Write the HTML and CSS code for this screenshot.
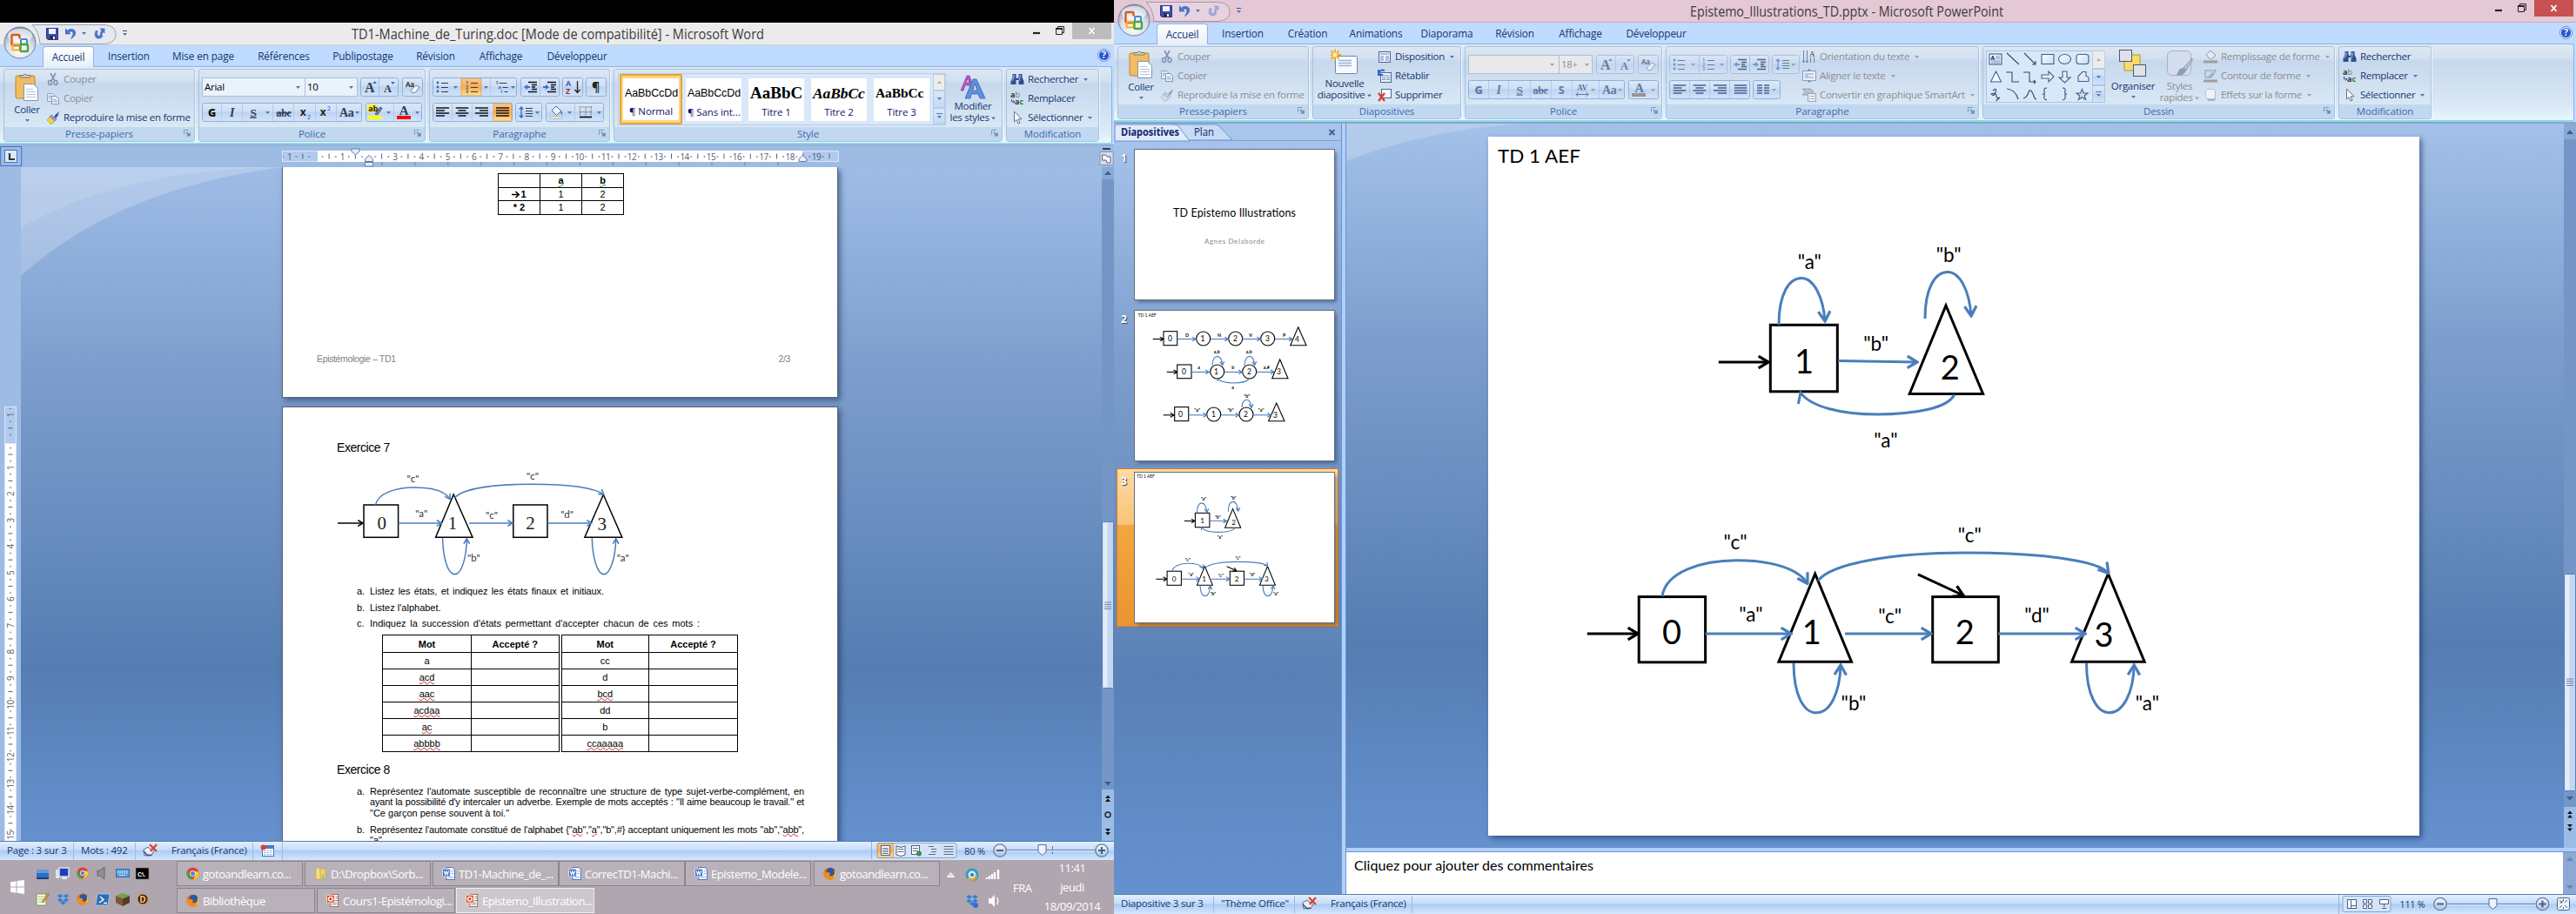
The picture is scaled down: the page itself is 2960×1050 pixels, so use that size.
FILE: index.html
```html
<!DOCTYPE html>
<html lang="fr">
<head>
<meta charset="utf-8">
<title>TD1-Machine_de_Turing.doc</title>
<link rel="stylesheet" href="styles.css">
</head>
<body>
<svg class="defs" width="0" height="0">
  <defs>
    <linearGradient id="gBtn" x1="0" y1="0" x2="0" y2="1"><stop offset="0" stop-color="#dbe8f8"/><stop offset=".45" stop-color="#cfdff4"/><stop offset=".5" stop-color="#bdd3f0"/><stop offset="1" stop-color="#d3e4f8"/></linearGradient>
    <linearGradient id="gHot" x1="0" y1="0" x2="0" y2="1"><stop offset="0" stop-color="#fbc78c"/><stop offset=".5" stop-color="#fda94c"/><stop offset="1" stop-color="#fde296"/></linearGradient>
    <radialGradient id="gOrb" cx=".5" cy=".75" r=".7"><stop offset="0" stop-color="#fff"/><stop offset=".6" stop-color="#d8dde8"/><stop offset="1" stop-color="#8d9ab4"/></radialGradient>
    <linearGradient id="gKnob" x1="0" y1="0" x2="0" y2="1"><stop offset="0" stop-color="#f4f8ff"/><stop offset="1" stop-color="#a9c1e2"/></linearGradient>
    <linearGradient id="gShape" x1="0" y1="0" x2="1" y2="1"><stop offset="0" stop-color="#fff"/><stop offset="1" stop-color="#c5daf3"/></linearGradient>
    <marker id="headBlue" viewBox="0 0 10 10" refX="9" refY="5" markerWidth="5.4" markerHeight="5.4" orient="auto"><path d="M2 0.8L9 5L2 9.2" fill="none" stroke="#4a7ebb" stroke-width="2"/></marker>
    <marker id="headBlack" viewBox="0 0 10 10" refX="9" refY="5" markerWidth="5.4" markerHeight="5.4" orient="auto"><path d="M2 0.8L9 5L2 9.2" fill="none" stroke="#000" stroke-width="2"/></marker>

    <symbol id="orb" viewBox="0 0 38 38">
      <circle cx="19" cy="19" r="18" fill="url(#gOrb)" stroke="#7685a3"/>
      <ellipse cx="19" cy="11" rx="14" ry="8" fill="#fff" opacity=".6"/>
      <g fill="none" stroke-width="2.4">
        <path d="M18 22h-7q-1.500 0-1.500-1.500v-9q0-1.500 1.500-1.500h6q1.500 0 1.500 1.500v3" stroke="#e0571b"/>
        <rect x="20" y="15" width="7" height="6" rx="1" stroke="#3f8cd6" stroke-width="2"/>
        <rect x="10.500" y="21" width="8" height="6.500" rx="1" stroke="#f6b21a" stroke-width="2"/>
        <path d="M19.500 20.500v7.500q0 1 1 1h6q1.500 0 1.500-1.500v-5q0-1.500-1.500-1.500h-7" stroke="#4da53a"/>
      </g>
    </symbol>
    <symbol id="save" viewBox="0 0 14 14"><path d="M.5.5h13v13H2L.5 12z" fill="#3b4fb5" stroke="#27337c"/><rect x="3" y="1" width="8" height="6" fill="#f2f5ff"/><rect x="4" y="9" width="7" height="4.500" fill="#2b2f4f"/><rect x="8" y="10" width="2" height="3" fill="#fff"/></symbol>
    <symbol id="undo" viewBox="0 0 14 14"><path d="M0 1v6.500h6.500L4.600 5.500q4-2.500 5 .5 .6 3-2.600 7.500 6.500-4 5.500-8.500Q11 .5 5.500 1.800 4 2.200 2.700 3.400z" fill="#4a79d8" stroke="#2a4fa5" stroke-width=".6"/></symbol>
    <symbol id="redo" viewBox="0 0 14 14"><path d="M7.500 1H13v5.500l-1.700-1.600Q9 8 10.500 11 7 14.500 3 12.500-.5 9 2.500 3.500l2 .5q-1.500 4.500 1 6 2.500.5 2.500-2 0-3 1.500-5z" fill="#4a79d8" stroke="#2a4fa5" stroke-width=".5"/></symbol>
    <symbol id="help" viewBox="0 0 15 15"><circle cx="7.500" cy="7.500" r="7" fill="#fff" stroke="#5a7fb8"/><circle cx="7.500" cy="7.500" r="5.600" fill="#2457d6"/><text x="7.500" y="11.300" text-anchor="middle" font-size="10.500" font-weight="700" fill="#fff">?</text></symbol>
    <symbol id="paste" viewBox="0 0 28 32"><rect x="1" y="3" width="22" height="26" rx="2" fill="#f0bd62" stroke="#b98432"/><path d="M6 5V2.500h4Q12-.5 14 2.500h4V5z" fill="#d9d4c8" stroke="#7d7867"/><path d="M10.500 12.500h11l5 5v14h-16z" fill="#fdfeff" stroke="#7f93b5"/><path d="M13 18.500h8M13 21.500h11M13 24.500h11M13 27.500h11" stroke="#b4c3dc"/></symbol>
    <symbol id="cut" viewBox="0 0 16 16"><path d="M5 1l5 9M11 1L6 10" stroke="#7f93b3" stroke-width="1.600"/><ellipse cx="4.500" cy="12" rx="2" ry="2.500" fill="none" stroke="#7f93b3" stroke-width="1.500"/><ellipse cx="11" cy="12" rx="2" ry="2.500" fill="none" stroke="#7f93b3" stroke-width="1.500"/></symbol>
    <symbol id="copy" viewBox="0 0 16 16"><path d="M1.500 2.500h6l2 2v7h-8z" fill="#dfe9f6" stroke="#8ea3c3"/><path d="M6.500 5.500h5l3 3v6h-8z" fill="#eaf1fa" stroke="#8095b8"/><path d="M8 9.500h4M8 11.500h5M3 5.500h3M3 7.500h2" stroke="#8ea3c3"/></symbol>
    <symbol id="brush" viewBox="0 0 16 16"><path d="M15 1l-4 3.500-2 3 2 1.500 2.500-3z" fill="#40518f"/><path d="M6 5l6 5-2 2-6-5z" fill="#8da8dd" stroke="#54699e" stroke-width=".7"/><path d="M4 7l5.500 5q-1 3-4 3.500L1 11q1.500-1 3-4z" fill="#f2d34c" stroke="#b08b1f" stroke-width=".7"/></symbol>
    <symbol id="brushOff" viewBox="0 0 16 16"><path d="M15 1l-4 3.500-2 3 2 1.500 2.500-3z" fill="#98a6c0"/><path d="M6 5l6 5-2 2-6-5z" fill="#c7d3e8" stroke="#8fa0bf" stroke-width=".7"/><path d="M4 7l5.500 5q-1 3-4 3.500L1 11q1.500-1 3-4z" fill="#d5dbe6" stroke="#9aa6bb" stroke-width=".7"/></symbol>
    <symbol id="find" viewBox="0 0 16 14"><path d="M2.500 5V1h4v4l1 1h1l1-1V1h4v4l2 4v4h-6V8h-3v5H.5V9z" fill="#2f4f92"/><path d="M4 2v3L2 9M11 2v3l-1 4" stroke="#b5c9ec" fill="none"/></symbol>
    <symbol id="replace" viewBox="0 0 16 16"><text x="0" y="7" font-size="9" font-weight="700" fill="#333">a</text><text x="5.500" y="7" font-size="9" fill="#777">b</text><text x="5" y="15" font-size="9" font-weight="700" fill="#333">a</text><text x="10.500" y="15" font-size="9" font-weight="700" fill="#1f8a2c">c</text><path d="M1.500 9v3h3M3 10.500l2 1.500-2 1.500" fill="none" stroke="#3a5ca8"/></symbol>
    <symbol id="pointer" viewBox="0 0 16 16"><path d="M4.500 1v12l2.700-2.500 1.800 4.500 2-.8-1.900-4.400H13z" fill="#fff" stroke="#5d6f95"/></symbol>
    <symbol id="launch" viewBox="0 0 8 8"><path d="M.5 6V.5H6" fill="none" stroke="#7b9fc9"/><path d="M3 3l3 3M7 3.500V7H3.500" fill="none" stroke="#56779f" stroke-width="1.200"/></symbol>
    <symbol id="dd" viewBox="0 0 5 3"><path d="M0 0h5L2.500 3z" fill="#4a78b8"/></symbol>
    <symbol id="ddOff" viewBox="0 0 5 3"><path d="M0 0h5L2.500 3z" fill="#9c9fa6"/></symbol>
    <symbol id="bullets" viewBox="0 0 14 14"><g fill="#3c5fa8"><circle cx="2" cy="2" r="1.400"/><circle cx="2" cy="7" r="1.400"/><circle cx="2" cy="12" r="1.400"/></g><path d="M6 2.500h8M6 7.500h8M6 12.500h8" stroke="#333b52" stroke-width="1.200"/></symbol>
    <symbol id="numbers" viewBox="0 0 14 14"><g font-size="5.500" font-weight="700" fill="#3c5fa8"><text x="0" y="4">1</text><text x="0" y="9">2</text><text x="0" y="14">3</text></g><path d="M6 2.500h8M6 7.500h8M6 12.500h8" stroke="#333b52" stroke-width="1.200"/></symbol>
    <symbol id="multi" viewBox="0 0 14 14"><g font-size="5.500" font-weight="700" fill="#3c5fa8"><text x="0" y="4">1</text><text x="3" y="9">a</text><text x="6" y="14">i</text></g><path d="M4 2.500h9M8 7.500h6M10 12.500h4" stroke="#333b52" stroke-width="1.200"/></symbol>
    <symbol id="outdent" viewBox="0 0 16 14"><path d="M5 1.500h10M9 4.500h6M9 7h4M9 9.500h6M5 12.500h10" stroke="#10131c" stroke-width="1.500"/><path d="M0 7l4-3v2h3v2H4v2z" fill="#3c6fc8"/></symbol>
    <symbol id="indent" viewBox="0 0 16 14"><path d="M5 1.500h10M9 4.500h6M9 7h4M9 9.500h6M5 12.500h10" stroke="#10131c" stroke-width="1.500"/><path d="M7 7L3 4v2H0v2h3v2z" fill="#3c6fc8"/></symbol>
    <symbol id="alL" viewBox="0 0 15 13"><path d="M0 1.500h15M0 4.500h10M0 7.500h15M0 10.500h10" stroke="currentColor" stroke-width="1.600"/></symbol>
    <symbol id="alC" viewBox="0 0 15 13"><path d="M0 1.500h15M3 4.500h9M0 7.500h15M3 10.500h9" stroke="currentColor" stroke-width="1.600"/></symbol>
    <symbol id="alR" viewBox="0 0 15 13"><path d="M0 1.500h15M5 4.500h10M0 7.500h15M5 10.500h10" stroke="currentColor" stroke-width="1.600"/></symbol>
    <symbol id="alJ" viewBox="0 0 15 13"><path d="M0 1.500h15M0 4.500h15M0 7.500h15M0 10.500h15" stroke="currentColor" stroke-width="1.600"/></symbol>
    <symbol id="spacing" viewBox="0 0 16 14"><path d="M3 1v12M.8 3.500L3 1l2.200 2.500M.8 10.500L3 13l2.200-2.500" fill="none" stroke="#3c6fc8" stroke-width="1.400"/><path d="M8 2.500h8M8 5.500h8M8 8.500h8M8 11.500h8" stroke="#333b52" stroke-width="1.200"/></symbol>
    <symbol id="bucket" viewBox="0 0 16 16"><path d="M3 6l5-5 6 5.500-5.500 5z" fill="#eef4fc" stroke="#4a6699"/><path d="M13 6q3 2 2 5-2-1-2-5z" fill="#3c6fc8"/><rect x="0" y="12.500" width="15" height="3" fill="#e9e3d2" stroke="#999" stroke-width=".5"/></symbol>
    <symbol id="borders" viewBox="0 0 15 14"><path d="M.5 0v12M7.500 0v12M14 0v12M0 .5h15M0 6.500h15" stroke="#444" stroke-dasharray="1 1.300"/><path d="M0 13h15" stroke="#000" stroke-width="1.600"/></symbol>
    <symbol id="eraser" viewBox="0 0 17 16"><text x="0" y="8" font-size="8" font-weight="700" fill="#333">Aa</text><path d="M6 12l6-6 4 2-5 6.500q-4 1-5-2.500z" fill="#f4f6fb" stroke="#6d7c9c"/></symbol>
    <symbol id="spell" viewBox="0 0 18 16"><path d="M1 7l5-3 3 3 5-1-4 8-3-1-5 1z" fill="#e8eef8" stroke="#5a6a88"/><path d="M1 9l5 5 4-1" fill="none" stroke="#3f4f6b" stroke-width="1.500"/><path d="M8 1l8 8M16 1L9 9" stroke="#e23b22" stroke-width="2"/></symbol>
    <symbol id="macro" viewBox="0 0 16 14"><rect x="2.500" y="1.500" width="13" height="12" fill="#fff" stroke="#4f6fae"/><rect x="3" y="2" width="12" height="3" fill="#4f7bd0"/><path d="M4 7.500h10M4 9.500h10M4 11.500h10" stroke="#9cb4dc" stroke-dasharray="2.500 1"/><circle cx="3.500" cy="3.500" r="3" fill="#d9442a"/></symbol>
    <symbol id="minus" viewBox="0 0 16 16"><circle cx="8" cy="8" r="7.200" fill="url(#gKnob)" stroke="#5f7ba8" stroke-width="1.300"/><path d="M4 8h8" stroke="#4d5d7c" stroke-width="2"/></symbol>
    <symbol id="plus" viewBox="0 0 16 16"><circle cx="8" cy="8" r="7.200" fill="url(#gKnob)" stroke="#5f7ba8" stroke-width="1.300"/><path d="M4 8h8M8 4v8" stroke="#4d5d7c" stroke-width="2"/></symbol>
    <symbol id="wordDoc" viewBox="0 0 17 17"><path d="M5.500.5h8l3 3v13h-11z" fill="#f4f8ff" stroke="#3d62ac"/><path d="M12 5.500h3M12 8.500h3M8 13.500h7" stroke="#7f9dd6"/><rect x=".5" y="2.500" width="10" height="10" rx="1" fill="#3c6cc4" stroke="#e9f0ff"/><path d="M2.500 5l1.500 5 1.500-4.500L7 10l1.500-5" fill="none" stroke="#fff" stroke-width="1.300"/></symbol>
    <symbol id="pptDoc" viewBox="0 0 17 17"><rect x="6.500" y=".5" width="9" height="10" fill="#fff" stroke="#a0583d"/><rect x="5.500" y="8.500" width="10" height="8" fill="#fff" stroke="#9a6a55"/><path d="M7 11.500h7M7 13.500h7M12 3.500h3M12 5.500h3" stroke="#888"/><rect x=".5" y="1.500" width="10" height="10" rx="1" fill="#dd4a26" stroke="#ffe9df"/><circle cx="5.500" cy="6.500" r="2.700" fill="none" stroke="#fff" stroke-width="1.500"/></symbol>
    <symbol id="chrome" viewBox="0 0 16 16"><circle cx="8" cy="8" r="7.500" fill="#e2402f"/><path d="M1.400 4.500L5 11l3.500 4.500A7.500 7.500 0 0 1 1.400 4.500z" fill="#3ba84d"/><path d="M15 5.500H8l3.500 5-3.500 5A7.500 7.500 0 0 0 15 5.500z" fill="#f8cd2b"/><circle cx="8" cy="8" r="3.500" fill="#fff"/><circle cx="8" cy="8" r="2.700" fill="#4a86e0"/></symbol>
    <symbol id="firefox" viewBox="0 0 16 16"><circle cx="8" cy="8" r="7.500" fill="#e66a12"/><circle cx="9" cy="6" r="5" fill="#2a56a6"/><path d="M.8 5Q3 7 6 6.500q3 .5 2 2.500-1 2 1.500 2.500 4 0 4.500-5 2.500 4-1 7.500-5 3-9.500.500Q-.5 11 .8 5z" fill="#f08c1c"/><path d="M14 5q1.800 4-1.200 8" fill="none" stroke="#fbd03a" stroke-width="1.300"/></symbol>
    <symbol id="folder" viewBox="0 0 14 16"><path d="M1 1h5l1 2v12H1z" fill="#f4dd84" stroke="#c8a33d" stroke-width=".7"/><path d="M6 2h7v12l-6 2z" fill="#f0cf63" stroke="#c8a33d" stroke-width=".7"/><path d="M9 9l2 .5v5L9 15z" fill="#7db6e8"/></symbol>
    <symbol id="dropbox" viewBox="0 0 16 16"><g fill="#2a84df"><path d="M4.500 1L8 3.500 4.200 6 .8 3.300zM11.500 1L8 3.500 11.800 6l3.400-2.700zM.8 8.500L4.200 6 8 8.500 4.500 11zM15.200 8.500L11.800 6 8 8.500 11.500 11zM8 9.300l3.500 2.500L8 14.500l-3.500-2.700z"/></g></symbol>

    <g id="automate">
      <text class="t" x="11" y="30" font-size="22" textLength="95" lengthAdjust="spacingAndGlyphs">TD 1 AEF</text>
      <g class="st">
        <rect x="324.300" y="216.300" width="77" height="76.500"/><path d="M526 194L568.600 295.500H484.200z"/>
        <rect x="173.200" y="528.600" width="76.400" height="75.200"/><path d="M375.700 502.200L417.500 603.200H333.900z"/>
        <rect x="510.700" y="528.600" width="75.600" height="75.200"/><path d="M712.400 502.200L754.200 603.200H670.600z"/>
        <path d="M493.900 502.800L546 527" marker-end="url(#headBlack)"/>
        <path d="M264.800 259H322" marker-end="url(#headBlack)"/><path d="M113.800 571H172" marker-end="url(#headBlack)"/>
      </g>
      <g class="tr">
        <path d="M334 216C334 180 346 162.500 360 162.500S385 184 387 212"/>
        <path d="M502 209C502 173 514 155.500 528 155.500S553 177 555 206"/>
        <path d="M402 257.600L493 259"/>
        <path class="nohead" d="M535.600 296.500C528 312 490 319 447 319 405 319 370 310 359 294L356.400 307"/>
        <path d="M200 528C204 500 245 486.700 286 486.700S357 497 367 513.500"/>
        <path d="M379 510C395 490 465 478 548 478S700 486 713 501.500"/>
        <path d="M249.600 571H348"/><path d="M410 571H509"/><path d="M586 571H686"/>
        <path d="M351 605C351 640 362 661.800 377.300 661.800S404 640 405 607"/>
        <path d="M687.500 605C687.500 640 699 661.800 714 661.800S741.500 640 742.200 607"/>
      </g>
      <g class="d" text-anchor="middle"><text x="363" y="272">1</text><text x="530.800" y="278.500">2</text><text x="211" y="583">0</text><text x="371.700" y="583">1</text><text x="547.700" y="583">2</text><text x="707.600" y="586">3</text></g>
      <g class="l" text-anchor="middle"><text x="369.300" y="151.500">"a"</text><text x="529.200" y="144">"b"</text><text x="445.600" y="245.600">"b"</text><text x="457" y="357">"a"</text><text x="284" y="474">"c"</text><text x="302" y="557">"a"</text><text x="553.300" y="465.500">"c"</text><text x="461.700" y="559">"c"</text><text x="630.500" y="558">"d"</text><text x="420" y="659">"b"</text><text x="757.400" y="659">"a"</text></g>
    </g>
  </defs>
</svg>

<main class="desk">
<section class="left">
  <div class="void"></div>
  <div class="app word">
    <header class="title">
      <svg class="orb"><use href="#orb"/></svg>
      <svg class="qat" width="120" height="25" viewBox="0 0 120 25"><path d="M0 2.500H84Q96 4 96 13.500T84 24.500H9Q8 10 0 2.500" fill="#dfe6f2" fill-opacity=".5" stroke="#9aa5b8"/><use href="#save" x="16" y="6" width="14" height="14"/><use href="#undo" x="38" y="6" width="13" height="13"/><use href="#dd" x="57" y="11" width="5" height="3"/><use href="#redo" x="71" y="6" width="13" height="13"/><path d="M104 9.500h5" stroke="#274f8f"/><use href="#dd" x="104" y="12" width="5" height="3"/></svg>
      <svg class="caption" width="482" height="25"><text x="0" y="18.500" font-size="16" textLength="474" lengthAdjust="spacingAndGlyphs">TD1-Machine_de_Turing.doc [Mode de compatibilité] - Microsoft Word</text></svg>
      <svg class="winctl" width="93" height="20" viewBox="0 0 93 20"><rect x="48" width="45" height="19" fill="#bcbcbc"/><path d="M3 12h8" stroke="#222" stroke-width="2.200"/><path d="M29.500 6.500h7v7h-7zM31.500 6V4.500h7v7H37" fill="none" stroke="#222"/><path d="M29 7h8" stroke="#222" stroke-width="2"/><path d="M67.500 6l6 7M73.500 6l-6 7" stroke="#fff" stroke-width="1.700"/></svg>
    </header>
    <nav class="tabs"><b>Accueil</b><span class="w80">Insertion</span><span class="w91">Mise en page</span><span class="w94">Références</span><span class="w88">Publipostage</span><span class="w79">Révision</span><span class="w71">Affichage</span><span class="w104">Développeur</span><svg class="help" width="15" height="15"><use href="#help"/></svg></nav>
    <div class="ribbon">
      <section class="grp g-clip">
        <div class="body">
          <div class="big"><svg width="28" height="32"><use href="#paste"/></svg><span>Coller</span><svg width="5" height="3"><use href="#dd"/></svg></div>
          <ul class="cmds"><li class="off"><svg><use href="#cut"/></svg>Couper</li><li class="off"><svg><use href="#copy"/></svg>Copier</li><li><svg><use href="#brush"/></svg>Reproduire la mise en forme</li></ul>
        </div>
        <footer>Presse-papiers<svg><use href="#launch"/></svg></footer>
      </section>
      <section class="grp g-font">
        <div class="rows">
          <svg width="256" height="22" viewBox="232 88 256 22">
            <rect x="232.500" y="88.500" width="178" height="21" fill="#eaf2fb" stroke="#abc1de"/><path d="M350.500 89v20" stroke="#abc1de"/><text x="235" y="103" font-size="11.500" fill="#000">Arial</text><text x="353" y="103" font-size="11.500" fill="#000">10</text><use href="#dd" x="340" y="98" width="5" height="3"/><use href="#dd" x="401" y="98" width="5" height="3"/>
            <rect class="bx" x="414.500" y="88.500" width="43" height="21" rx="2"/><path d="M435.500 89v20" stroke="#a3bfe0"/><text class="sf" x="419" y="105" font-size="16" font-weight="700">A</text><text class="sf" x="441" y="105" font-size="12.500" font-weight="700">A</text><path d="M428 95l2.500-3 2.500 3zM449 93h5l-2.500 3z" fill="#3c6fc8"/>
            <rect class="bx" x="462.500" y="88.500" width="23" height="21" rx="2"/><use href="#eraser" x="466" y="91" width="17" height="16"/>
          </svg>
          <svg width="256" height="22" viewBox="232 117 256 22">
            <rect class="bx" x="232.500" y="117.500" width="183" height="21" rx="2"/><path d="M254.500 118v20M278.500 118v20M313.500 118v20M337.500 118v20M362.500 118v20M386.500 118v20" stroke="#b3cae8"/>
            <text x="243.500" y="132.500" text-anchor="middle" font-size="12.500" font-weight="800" fill="#111">G</text><text class="sf" x="266.500" y="133" text-anchor="middle" font-size="14" font-style="italic" font-weight="700">I</text><text class="sf" x="291" y="132.500" text-anchor="middle" font-size="13.500" font-weight="700" text-decoration="underline">S</text><use href="#dd" x="305" y="127" width="5" height="3"/><text class="sf" x="326" y="132.500" text-anchor="middle" font-size="12" font-weight="700" text-decoration="line-through">abc</text><text x="348" y="132" text-anchor="middle" font-size="12" font-weight="700" fill="#222">x</text><text x="353" y="135.500" font-size="7" fill="#2456c8">2</text><text x="371" y="132" text-anchor="middle" font-size="12" font-weight="700" fill="#222">x</text><text x="376" y="126" font-size="7" fill="#2456c8">2</text><text class="sf" x="390" y="133" font-size="14" font-weight="700">Aa</text><use href="#dd" x="408" y="127" width="5" height="3"/>
            <rect class="bx" x="420.500" y="117.500" width="64" height="21" rx="2"/><path d="M452.500 118v20" stroke="#b3cae8"/><rect x="422" y="119" width="11" height="9" fill="#ffee3a"/><text x="423" y="127" font-size="9.500" font-weight="700" fill="#222">ab</text><path d="M431 130l6-8 2 1.500-5 7z" fill="#6d8fc9" stroke="#445"/><rect x="423" y="132" width="16" height="4" fill="#ffff00"/><use href="#dd" x="444" y="127" width="5" height="3"/><text class="sf" x="464" y="131" text-anchor="middle" font-size="15" font-weight="700" fill="#2c4c8f">A</text><rect x="456" y="132" width="16" height="4" fill="#f00"/><use href="#dd" x="477" y="127" width="5" height="3"/>
          </svg>
        </div>
        <footer>Police<svg><use href="#launch"/></svg></footer>
      </section>
      <section class="grp g-para">
        <div class="rows">
          <svg width="201" height="22" viewBox="498 88 201 22">
            <rect class="bx" x="498.500" y="88.500" width="96" height="21" rx="2"/><rect x="531" y="89" width="23" height="20" fill="url(#gHot)" stroke="#c8954f" stroke-width=".6"/><path d="M564.500 89v20" stroke="#b3cae8"/>
            <use href="#bullets" x="502" y="92" width="14" height="14"/><use href="#dd" x="522" y="98" width="5" height="3"/><use href="#numbers" x="536" y="92" width="14" height="14"/><use href="#dd" x="557" y="98" width="5" height="3"/><use href="#multi" x="570" y="92" width="15" height="14"/><use href="#dd" x="588" y="98" width="5" height="3"/>
            <rect class="bx" x="599.500" y="88.500" width="44" height="21" rx="2"/><path d="M621.500 89v20" stroke="#b3cae8"/><use href="#outdent" x="603" y="92" width="16" height="14"/><use href="#indent" x="625" y="92" width="16" height="14"/>
            <rect class="bx" x="647.500" y="88.500" width="23" height="21" rx="2"/><text x="651" y="98" font-size="9" font-weight="700" fill="#3c5fc8">A</text><text x="651" y="107" font-size="9" font-weight="700" fill="#a83232">Z</text><path d="M664.500 92v13M661.500 102l3 3.500 3-3.500" stroke="#222" fill="none" stroke-width="1.300"/>
            <rect class="bx" x="674.500" y="88.500" width="23" height="21" rx="2"/><text x="681" y="103.500" font-size="14" font-weight="700" fill="#222">¶</text>
          </svg>
          <svg width="201" height="22" viewBox="498 117 201 22" color="#10131c">
            <rect class="bx" x="498.500" y="117.500" width="91" height="21" rx="2"/><path d="M520.500 118v20M543.500 118v20" stroke="#b3cae8"/><rect x="568" y="118" width="21" height="20" fill="url(#gHot)" stroke="#c8954f" stroke-width=".6"/>
            <use href="#alL" x="502" y="121.500" width="15" height="13"/><use href="#alC" x="524.500" y="121.500" width="15" height="13"/><use href="#alR" x="547" y="121.500" width="15" height="13"/><use href="#alJ" x="571" y="121.500" width="15" height="13"/>
            <rect class="bx" x="593.500" y="117.500" width="30" height="21" rx="2"/><use href="#spacing" x="597" y="121" width="16" height="14"/><use href="#dd" x="616" y="127" width="5" height="3"/>
            <rect class="bx" x="628.500" y="117.500" width="66" height="21" rx="2"/><path d="M661.500 118v20" stroke="#b3cae8"/><use href="#bucket" x="632" y="120" width="16" height="16"/><use href="#dd" x="653" y="127" width="5" height="3"/><use href="#borders" x="667" y="121" width="14" height="14"/><use href="#dd" x="687" y="127" width="5" height="3"/>
          </svg>
        </div>
        <footer>Paragraphe<svg><use href="#launch"/></svg></footer>
      </section>
      <section class="grp g-style">
        <div class="body">
          <div class="gallery">
            <div class="sty on"><i>AaBbCcDd</i><span>¶ Normal</span></div>
            <div class="sty"><i>AaBbCcDd</i><span>¶ Sans int...</span></div>
            <div class="sty h1"><i>AaBbC</i><span>Titre 1</span></div>
            <div class="sty h2"><i>AaBbCc</i><span>Titre 2</span></div>
            <div class="sty h3"><i>AaBbCc</i><span>Titre 3</span></div>
            <div class="updown"><span><svg width="5" height="3"><path d="M0 3h5L2.500 0z" fill="#aaa"/></svg></span><span><svg width="5" height="3"><use href="#dd"/></svg></span><span><svg width="7" height="7"><path d="M0 .5h7" stroke="#4a78b8"/><path d="M1 3h5L3.500 6z" fill="#4a78b8"/></svg></span></div>
          </div>
          <div class="big modif"><svg width="30" height="28" viewBox="0 0 30 28"><path d="M1 18L8 1h3l5 15h-4l-1-4H6l-2 6zM7 9h4L9 4z" fill="#b75bc4" stroke="#7c3a8c" stroke-width=".7"/><path d="M6 27L15 5h4l10 22h-6l-2-5h-8l-1 5zM14 18h6l-3-8z" fill="#5b92e0" stroke="#2f5aa5" stroke-width=".7"/></svg><span>Modifier<br>les styles <svg width="5" height="4"><use href="#dd"/></svg></span></div>
        </div>
        <footer>Style<svg><use href="#launch"/></svg></footer>
      </section>
      <section class="grp g-mod">
        <div class="body"><ul class="cmds"><li><svg><use href="#find"/></svg>Rechercher<svg class="ar"><use href="#dd"/></svg></li><li><svg><use href="#replace"/></svg>Remplacer</li><li><svg><use href="#pointer"/></svg>Sélectionner<svg class="ar"><use href="#dd"/></svg></li></ul></div>
        <footer>Modification</footer>
      </section>
    </div>
    <svg class="hruler" width="1280" height="26" viewBox="0 166 1280 26">
      <defs><pattern id="tk" x="363" y="173" width="30.260" height="13" patternUnits="userSpaceOnUse"><path d="M7.600 6v2M22.700 6v2" stroke="#555f73"/><path d="M15.100 3.500v6" stroke="#555f73"/></pattern></defs>
      <rect y="165" width="1280" height="27" fill="#9dbbe3"/><rect y="165" width="1280" height="2" fill="#86a6cf"/>
      <rect x=".7" y="168.500" width="24" height="22" fill="none" stroke="#4a6fc0"/><rect x="5.500" y="172.500" width="14" height="14" fill="#dce9fb" stroke="#4a6fc0"/><path d="M11 176v7h6" fill="none" stroke="#333" stroke-width="2.200"/>
      <rect x="324.500" y="173.500" width="639" height="12" fill="#b2caee" stroke="#d9e6f8"/><rect x="365" y="173" width="557" height="13" fill="#fff"/>
      <rect x="325" y="173" width="630" height="13" fill="url(#tk)"/>
      <text y="183.500" font-size="10" text-anchor="middle" fill="#555f73"><tspan x="332.700">1</tspan><tspan x="393.300">1</tspan><tspan x="453.800">3</tspan><tspan x="484">4</tspan><tspan x="514.300">5</tspan><tspan x="544.600">6</tspan><tspan x="574.800">7</tspan><tspan x="605">8</tspan><tspan x="635.300">9</tspan><tspan x="665.600">10</tspan><tspan x="695.900">11</tspan><tspan x="726">12</tspan><tspan x="756.400">13</tspan><tspan x="786.600">14</tspan><tspan x="816.900">15</tspan><tspan x="847">16</tspan><tspan x="877.400">17</tspan><tspan x="907.700">18</tspan><tspan x="938">19</tspan></text>
      <path d="M438.500 188h489" stroke="#777f8e" stroke-width="3.500" stroke-dasharray="1 36.900"/>
      <path d="M404 171h9v3l-4.500 4-4.500-4z" fill="#e8eef8" stroke="#5c7db5"/><path d="M419.500 185.500v-3l4.500-4 4.500 4v3zM419.500 186.500h9v4.500h-9z" fill="#e8eef8" stroke="#5c7db5"/><path d="M918 185.500v-3l4.500-4 4.500 4v3z" fill="#e8eef8" stroke="#5c7db5"/>
      <path d="M1267 171h9" stroke="#333f55" stroke-width="2"/><rect x="1264" y="174.500" width="15" height="15" fill="#d3dded" stroke="#8795ae"/><path d="M1266.500 178h4l1.500 2h4v7h-4l-1-3h-4.500z" fill="#fff" stroke="#555f73"/>
    </svg>
    <div class="work">
      <svg class="vruler" width="24" height="774" viewBox="0 192 24 774">
        <defs><pattern id="tv" x="5" y="507" width="14" height="30.260" patternUnits="userSpaceOnUse"><path d="M6 7.600h2M6 22.700h2" stroke="#555f73"/><path d="M4.500 15.100h5" stroke="#555f73"/></pattern></defs>
        <rect y="192" width="24" height="774" fill="#9dbbe3"/><rect x="5.500" y="467.500" width="13" height="500" fill="#b2caee" stroke="#d9e6f8"/><rect x="6" y="509.500" width="12" height="457" fill="#fff"/><rect x="5" y="468" width="14" height="498" fill="url(#tv)"/>
        <g font-size="10" text-anchor="middle" fill="#555f73" class="vn"><text transform="translate(16 476.700)rotate(-90)">1</text><text transform="translate(16 537.300)rotate(-90)">1</text><text transform="translate(16 567.500)rotate(-90)">2</text><text transform="translate(16 597.800)rotate(-90)">3</text><text transform="translate(16 628)rotate(-90)">4</text><text transform="translate(16 658.300)rotate(-90)">5</text><text transform="translate(16 688.500)rotate(-90)">6</text><text transform="translate(16 718.800)rotate(-90)">7</text><text transform="translate(16 749)rotate(-90)">8</text><text transform="translate(16 779.300)rotate(-90)">9</text><text transform="translate(16 809.600)rotate(-90)">10</text><text transform="translate(16 839.900)rotate(-90)">11</text><text transform="translate(16 870)rotate(-90)">12</text><text transform="translate(16 900.400)rotate(-90)">13</text><text transform="translate(16 930.600)rotate(-90)">14</text><text transform="translate(16 959.500)rotate(-90)">15</text></g>
      </svg>
      <div class="canvas">
        <svg class="swoosh" width="300" height="130" viewBox="0 0 300 130"><path d="M0 0H300Q110 25 0 125z" fill="#fff" opacity=".22"/><path d="M0 0H290Q110 5 0 70z" fill="#fff" opacity=".12"/></svg>
        <article class="page p1">
          <table class="mini"><tr><td></td><th><u class="g">a</u></th><th><u class="g">b</u></th></tr><tr><th><svg class="arr" width="10" height="9" viewBox="0 0 10 9"><path d="M0 4.500h8M4.500 1L8.300 4.500 4.500 8" fill="none" stroke="#000" stroke-width="1.500"/></svg>1</th><td>1</td><td>2</td></tr><tr><th>* 2</th><td>1</td><td>2</td></tr></table>
          <div class="pfoot"><span>Epistémologie – TD1</span><span>2/3</span></div>
        </article>
        <article class="page p2">
          <h2>Exercice 7</h2>
          <svg class="fig" width="340" height="124" viewBox="0 0 340 124">
            <g class="st"><rect x="30" y="41" width="39.600" height="37.300"/><path d="M133.200 29L155 78.300H112.600z"/><rect x="201.800" y="41" width="39.200" height="37.300"/><path d="M305.300 29.300L326.800 78.300H283.900z"/><path d="M0 62H29" marker-end="url(#headBlack)"/></g>
            <g class="tr"><path d="M43.500 41C46 28 66 21 88.600 21S124 26 129 34.500"/><path d="M134.500 32.700C145 22 180 17.300 222.400 17.300S295 21 305.800 29.300"/><path d="M69.600 62H119.500"/><path d="M151 62H201"/><path d="M241 62H292"/><path d="M120.600 79.300C121 100 126 120.700 134.500 120.700S148 100 148.300 80"/><path d="M292.300 79.300C292.700 100 298 120.700 305.800 120.700S319.400 100 319.700 80"/></g>
            <g class="d" text-anchor="middle"><text x="50.700" y="69.300">0</text><text x="132" y="69.300">1</text><text x="221.600" y="69.300">2</text><text x="303.700" y="70.300">3</text></g>
            <g class="l" text-anchor="middle"><text x="86.500" y="15.300">"c"</text><text x="96.200" y="55.300">"a"</text><text x="224" y="11.700">"c"</text><text x="177" y="56.700">"c"</text><text x="263.700" y="56">"d"</text><text x="156.300" y="105.700">"b"</text><text x="327.700" y="105.700">"a"</text></g>
          </svg>
          <div class="li"><em>a.</em><p class="j269">Listez les états, et indiquez les états finaux et initiaux.</p></div>
          <div class="li"><em>b.</em><p>Listez l'alphabet.</p></div>
          <div class="li"><em>c.</em><p class="j379">Indiquez la succession d'états permettant d'accepter chacun de ces mots :</p></div>
          <table class="mots">
            <tr><th>Mot</th><th class="dbl">Accepté ?</th><th>Mot</th><th>Accepté ?</th></tr>
            <tr><td>a</td><td class="dbl"></td><td>cc</td><td></td></tr>
            <tr><td><u>acd</u></td><td class="dbl"></td><td>d</td><td></td></tr>
            <tr><td><u>aac</u></td><td class="dbl"></td><td><u>bcd</u></td><td></td></tr>
            <tr><td><u>acdaa</u></td><td class="dbl"></td><td>dd</td><td></td></tr>
            <tr><td><u>ac</u></td><td class="dbl"></td><td>b</td><td></td></tr>
            <tr><td><u>abbbb</u></td><td class="dbl"></td><td><u>ccaaaaa</u></td><td></td></tr>
          </table>
          <h2 class="ex8">Exercice 8</h2>
          <div class="li tight"><em>a.</em><div><p class="j499">Représentez l'automate susceptible de reconnaître une structure de type sujet-verbe-complément, en</p><p class="j499 dense">ayant la possibilité d'y intercaler un adverbe. Exemple de mots acceptés : "Il aime beaucoup le travail." et</p><p>"Ce garçon pense souvent à toi."</p></div></div>
          <div class="li tight last"><em>b.</em><div><p class="j499 dense">Représentez l'automate constitué de l'alphabet {"<u>ab</u>","<u>a</u>","b",#} acceptant uniquement les mots "ab","<u>abb</u>",</p><p>"a".</p></div></div>
        </article>
      </div>
      <svg class="vscroll" width="14" height="774" viewBox="0 0 14 774"><rect width="14" height="774" fill="#7396c6"/><rect width="14" height="14" fill="#89a9d5"/><path d="M3 9h8L7 4.500z" fill="#3f5a8c"/><rect x=".5" y="407.500" width="13" height="191" rx="1" fill="#c3d6f1" stroke="#5f7db0"/><rect x="1.500" y="408.500" width="5" height="189" fill="#e3edfa"/><path d="M3 500h8M3 502.500h8M3 505h8M3 507.500h8" stroke="#6d85ad"/><path d="M3 706h8l-4 4.500z" fill="#3f5a8c"/><rect y="715" width="14" height="59" fill="#9cbce8"/><path d="M4 725l3-3.500 3 3.500zM4 729l3-3.500 3 3.500z" fill="#111"/><circle cx="7" cy="744" r="3" fill="none" stroke="#223" stroke-width="1.500"/><path d="M4 760h6l-3 3.500zM4 764h6l-3 3.500z" fill="#111"/></svg>
    </div>
    <footer class="status">
      <span class="s85">Page : 3 sur 3</span><span class="s71">Mots : 492</span><span class="s135"><svg width="18" height="16"><use href="#spell"/></svg>Français (France)</span><span class="s34"><svg width="16" height="14"><use href="#macro"/></svg></span>
      <svg class="zoom" width="279" height="21" viewBox="1001 967 279 21">
        <path d="M1001.500 967v20" stroke="#8fb0dd"/><rect x="1008" y="968.500" width="91" height="17" rx="2" fill="#d4e3f7" stroke="#86a5d0"/><rect x="1008.500" y="969" width="18" height="16" fill="url(#gHot)" stroke="#c8954f" stroke-width=".6"/>
        <g fill="#fff" stroke="#4a5f88"><rect x="1012.500" y="971.500" width="10" height="11"/><path d="M1030 972l5 1.500 5-1.500v10l-5 1.500-5-1.500z"/><rect x="1047.500" y="971.500" width="9" height="10"/></g><path d="M1014 974.500h7M1014 976.500h7M1014 978.500h7M1014 980.500h7M1031.500 975.500h7M1031.500 978.500h7M1049 974.500h6M1049 977.500h6M1067 972.500h6M1070 975.500h6M1070 978.500h6M1067 981.500h8M1084.500 972.500h11M1084.500 975.500h11M1084.500 978.500h11M1084.500 981.500h11" stroke="#5a6a88"/><circle cx="1056" cy="980.500" r="3" fill="#3b8f5f"/>
        <text x="1108" y="981.500" font-size="11.500" textLength="24" lengthAdjust="spacingAndGlyphs" fill="#15366f">80 %</text>
        <path d="M1157 976.500h101M1209.500 972v9" stroke="#5b7cae"/><path d="M1157 977.500h101" stroke="#e8f1fd"/><use href="#minus" x="1141" y="969" width="16" height="16"/><use href="#plus" x="1258" y="969" width="16" height="16"/><path d="M1193 970.500h9v8l-4.500 4-4.500-4z" fill="#eef4fc" stroke="#4f6c9e"/>
      </svg>
    </footer>
  </div>
  <footer class="taskbar">
    <svg class="start" width="16" height="16" viewBox="0 0 16 16"><path d="M0 2.300L6.500 1.300V7.500H0zM7.500 1.100L16 0V7.500H7.500zM0 8.500h6.500v6.200L0 13.700zM7.500 8.500H16V16l-8.500-1.200z" fill="#fff"/></svg>
    <svg class="quick" width="140" height="62" viewBox="38 988 140 62">
      <rect x="42" y="999" width="14" height="11" fill="#2f6fc0"/><rect x="42" y="999" width="14" height="4" fill="#5f9be0"/><rect x="42" y="1008" width="14" height="2" fill="#17407c"/>
      <rect x="68" y="997" width="11" height="10" fill="#1e3fc0" stroke="#dfe3ea" stroke-width="1.500"/><rect x="64" y="999" width="4" height="10" fill="#dfe3ea"/><path d="M71 1009h6" stroke="#eee" stroke-width="2"/>
      <use href="#chrome" x="88" y="996" width="14" height="14"/>
      <path d="M112 1000h3l5-4v14l-5-4h-3z" fill="#8d8f96" stroke="#666"/><rect x="133.500" y="998.500" width="15" height="9" fill="#4f9be0" stroke="#2f6fb0"/><path d="M135 1001h12M135 1003h12M137 1005.500h8" stroke="#fff" stroke-dasharray="1.500 1"/>
      <rect x="156" y="997" width="15" height="13" fill="#000" stroke="#888" stroke-width=".6"/><text x="158" y="1006.500" font-size="6.500" font-weight="700" fill="#fff">C:\.</text>
      <rect x="42" y="1027" width="11" height="13" fill="#fdfdf2" stroke="#7a9c4a"/><path d="M43.500 1030h8M43.500 1033h8M43.500 1036h8" stroke="#9bbf60"/><path d="M48 1036l7-10 1.500 1-6.500 10z" fill="#f0a020" stroke="#555" stroke-width=".5"/>
      <use href="#dropbox" x="65" y="1026" width="15" height="15"/><use href="#firefox" x="88" y="1026" width="14" height="14"/>
      <path d="M112 1027h14l-2 13h-14z" fill="#2d6db5" stroke="#bcd6f2" stroke-width=".7"/><path d="M115 1030l4 3.500-5 3.500M119 1037.500h4" fill="none" stroke="#fff" stroke-width="1.500"/>
      <path d="M133 1029l8-3 8 3-8 3.500z" fill="#6fa53d"/><path d="M133 1029l8 3.500v8.500l-8-4z" fill="#7c5638"/><path d="M149 1029l-8 3.500v8.500l8-4z" fill="#593a24"/>
      <circle cx="164" cy="1033" r="6" fill="#3a2312" stroke="#d99a52"/><text x="160.200" y="1036.700" font-size="10" font-weight="700" fill="#ffc37a">D</text>
    </svg>
    <div class="tasks">
      <div class="trow r1"><span><svg><use href="#chrome"/></svg>gotoandlearn.co...</span><span><svg><use href="#folder"/></svg>D:\Dropbox\Sorb...</span><span><svg><use href="#wordDoc"/></svg>TD1-Machine_de_...</span><span class="nl"><svg><use href="#wordDoc"/></svg>CorrecTD1-Machi...</span><span class="nl"><svg><use href="#wordDoc"/></svg>Epistemo_Modele...</span><span><svg><use href="#firefox"/></svg>gotoandlearn.co...</span></div>
      <div class="trow r2"><span><svg><use href="#firefox"/></svg>Bibliothèque</span><span><svg><use href="#pptDoc"/></svg>Cours1-Epistémologi...</span><span class="cur"><svg><use href="#pptDoc"/></svg>Epistemo_Illustration...</span></div>
    </div>
    <svg class="tray" width="72" height="62" viewBox="1084 988 72 62"><path d="M1088.500 1007.500h8l-4-5z" fill="#ddd" stroke="#fff"/><circle cx="1117" cy="1005" r="6" fill="#cfeaf5" stroke="#2b9fc4" stroke-width="3"/><path d="M1112 1009q6 5 10-3" fill="none" stroke="#e8a52a" stroke-width="2.500"/><circle cx="1117" cy="1005" r="2" fill="#2b7fb4"/><path d="M1134 1010v-2M1137 1010v-4M1140 1010v-6M1143 1010v-8M1147 1010v-11" stroke="#fff" stroke-width="2.400"/><use href="#dropbox" x="1109" y="1027" width="16" height="15"/><circle cx="1121" cy="1040" r="3" fill="#2f6fd0"/><path d="M1136 1032h3l4-4v14l-4-4h-3z" fill="#fff"/><path d="M1145.500 1031q2.500 4 0 8" fill="none" stroke="#fff" stroke-width="1.300"/></svg>
    <span class="lang">FRA</span>
    <div class="clock"><span>11:41</span><span>jeudi</span><span>18/09/2014</span></div>
  </footer>
</section>

<section class="app ppt">
  <header class="title">
    <svg class="orb"><use href="#orb"/></svg>
    <svg class="qat" width="120" height="25" viewBox="0 0 120 25"><path d="M0 2.500H84Q96 4 96 13.500T84 24.500H9Q8 10 0 2.500" fill="#e6dbe6" fill-opacity=".6" stroke="#a898ab"/><use href="#save" x="16" y="6" width="14" height="14"/><use href="#undo" x="38" y="6" width="13" height="13"/><use href="#dd" x="57" y="11" width="5" height="3"/><g opacity=".45"><use href="#redo" x="71" y="6" width="13" height="13"/></g><path d="M104 9.500h5" stroke="#274f8f"/><use href="#dd" x="104" y="12" width="5" height="3"/></svg>
    <svg class="caption" width="368" height="25"><text x="0" y="18.500" font-size="16" textLength="360" lengthAdjust="spacingAndGlyphs">Epistemo_Illustrations_TD.pptx - Microsoft PowerPoint</text></svg>
    <svg class="winctl" width="93" height="20" viewBox="0 0 93 20"><rect x="48" width="45" height="19" fill="#c75050"/><path d="M3 12h8" stroke="#222" stroke-width="2.200"/><path d="M29.500 6.500h7v7h-7zM31.500 6V4.500h7v7H37" fill="none" stroke="#222"/><path d="M29 7h8" stroke="#222" stroke-width="2"/><path d="M67.500 6l6 7M73.500 6l-6 7" stroke="#fff" stroke-width="1.700"/></svg>
  </header>
  <nav class="tabs"><b>Accueil</b><span class="w80">Insertion</span><span class="w69">Création</span><span class="w104">Animations</span><span class="w73">Diaporama</span><span class="w81">Révision</span><span class="w69">Affichage</span><span class="w104">Développeur</span><svg class="help" width="15" height="15"><use href="#help"/></svg></nav>
  <div class="ribbon">
    <section class="grp g-clip">
      <div class="body">
        <div class="big"><svg width="28" height="32"><use href="#paste"/></svg><span>Coller</span><svg width="5" height="3"><use href="#dd"/></svg></div>
        <ul class="cmds"><li class="off"><svg><use href="#cut"/></svg>Couper</li><li class="off"><svg><use href="#copy"/></svg>Copier</li><li class="off"><svg><use href="#brushOff"/></svg>Reproduire la mise en forme</li></ul>
      </div>
      <footer>Presse-papiers<svg><use href="#launch"/></svg></footer>
    </section>
    <section class="grp g-dia">
      <div class="body">
        <div class="big nouv"><svg width="32" height="30" viewBox="0 0 32 30"><rect x="5.500" y="8.500" width="25" height="20" rx="1" fill="#f7faff" stroke="#6e84ab"/><path d="M9 13.500h15M9 16.500h15M9 19.500h15" stroke="#9db1d6" stroke-width="1.500"/><path d="M5 .5v13M-1 7h13M.5 2.500l9 9M9.500 2.500l-9 9" stroke="#f5a81c" stroke-width="1.800"/><circle cx="5" cy="7" r="2.500" fill="#fff3a0"/></svg><span>Nouvelle<br>diapositive <svg width="5" height="4"><use href="#dd"/></svg></span></div>
        <ul class="cmds"><li><svg viewBox="0 0 16 16"><rect x="1.500" y="2.500" width="13" height="12" fill="#eef4fc" stroke="#4a6496"/><path d="M3 5h10M3 8h4M3 10h4M3 12h4M9 8h4M9 10h4M9 12h4" stroke="#7089ba"/></svg>Disposition<svg class="ar"><use href="#dd"/></svg></li><li><svg viewBox="0 0 16 16"><rect x="3.500" y="4.500" width="12" height="11" fill="#eef4fc" stroke="#4a6496"/><path d="M5 8h9M5 10.500h4M5 12.500h4M10 10.500h4M10 12.500h4" stroke="#7089ba"/><path d="M1 1v6h5M1 6Q3 0 8 2" fill="none" stroke="#2c63c8" stroke-width="2"/></svg>Rétablir</li><li><svg viewBox="0 0 16 16"><rect x="4.500" y="1.500" width="11" height="10" fill="#f4f8ff" stroke="#4a6496"/><path d="M1 6l7 9M8 6l-7 9" stroke="#dc3b22" stroke-width="2.200"/></svg>Supprimer</li></ul>
      </div>
      <footer>Diapositives</footer>
    </section>
    <section class="grp g-pfont">
      <div class="rows">
        <svg width="222" height="22" viewBox="1686 62 222 22">
          <rect x="1686.500" y="62.500" width="142" height="21" fill="#e9e9e9" stroke="#a9c0dc"/><path d="M1790.500 63v20" stroke="#a9c0dc"/><text x="1793" y="77" font-size="11.500" fill="#8d9097">18+</text><use href="#ddOff" x="1780" y="72" width="5" height="3"/><use href="#ddOff" x="1820" y="72" width="5" height="3"/>
          <g opacity=".6"><rect class="bx" x="1833.500" y="62.500" width="43" height="21" rx="2"/><path d="M1855.500 63v20" stroke="#a3bfe0"/><text class="sf" x="1838" y="79" font-size="16" font-weight="700">A</text><text class="sf" x="1861" y="79" font-size="12.500" font-weight="700">A</text><path d="M1847 69l2.500-3 2.500 3zM1868 67h5l-2.500 3z" fill="#3c6fc8"/><rect class="bx" x="1881.500" y="62.500" width="23" height="21" rx="2"/><use href="#eraser" x="1885" y="65" width="17" height="16"/></g>
        </svg>
        <svg width="222" height="22" viewBox="1686 91 222 22">
          <g class="dim"><rect class="bx" x="1686.500" y="91.500" width="179" height="21" rx="2"/><path d="M1709.500 92v20M1732.500 92v20M1757.500 92v20M1781.500 92v20M1805.500 92v20M1836.500 92v20" stroke="#b3cae8"/>
          <text x="1698" y="106.500" text-anchor="middle" font-size="12.500" font-weight="800">G</text><text class="sf" x="1721" y="107" text-anchor="middle" font-size="14" font-style="italic" font-weight="700">I</text><text class="sf" x="1745" y="106.500" text-anchor="middle" font-size="13.500" font-weight="700" text-decoration="underline">S</text><text class="sf" x="1769" y="106.500" text-anchor="middle" font-size="12" font-weight="700" text-decoration="line-through">abc</text><text x="1793" y="106.500" text-anchor="middle" font-size="12.500" font-weight="700">S</text><text class="sf" x="1817" y="102.500" text-anchor="middle" font-size="9.500" font-weight="700">AV</text><path d="M1810 107.500h14M1812.500 105l-2.500 2.500 2.500 2.500M1821.500 105l2.500 2.500-2.500 2.500" stroke="#5a76ab" fill="none"/><text class="sf" x="1840" y="107" font-size="14" font-weight="700">Aa</text>
          <rect class="bx" x="1870.500" y="91.500" width="34" height="21" rx="2"/><text class="sf" x="1882.500" y="105" text-anchor="middle" font-size="15" font-weight="700">A</text><rect x="1874" y="106" width="16" height="4" fill="#9a958f"/></g><use href="#ddOff" x="1827" y="101" width="5" height="3"/><use href="#ddOff" x="1858" y="101" width="5" height="3"/><use href="#ddOff" x="1896" y="101" width="5" height="3"/>
        </svg>
      </div>
      <footer>Police<svg><use href="#launch"/></svg></footer>
    </section>
    <section class="grp g-ppara">
      <div class="body">
      <div class="rows">
        <svg width="150" height="22" viewBox="1916 62 150 22"><g opacity=".6">
          <rect class="bx" x="1916.500" y="62.500" width="66" height="21" rx="2"/><path d="M1950.500 63v20" stroke="#8fafe0"/><use href="#bullets" x="1920" y="66" width="14" height="14"/><use href="#numbers" x="1954" y="66" width="14" height="14"/>
          <rect class="bx" x="1986.500" y="62.500" width="44" height="21" rx="2"/><path d="M2008.500 63v20" stroke="#8fafe0"/><use href="#outdent" x="1990" y="66" width="16" height="14"/><use href="#indent" x="2012" y="66" width="16" height="14"/>
          <rect class="bx" x="2034.500" y="62.500" width="31" height="21" rx="2"/><use href="#spacing" x="2038" y="66" width="16" height="14"/></g><use href="#ddOff" x="1941" y="72" width="5" height="3"/><use href="#ddOff" x="1974" y="72" width="5" height="3"/><use href="#ddOff" x="2056" y="72" width="5" height="3"/>
        </svg>
        <svg width="150" height="22" viewBox="1916 91 150 22" color="#4a5f92">
          <rect class="bx" x="1916.500" y="91.500" width="92" height="21" rx="2"/><path d="M1939.500 92v20M1962.500 92v20M1985.500 92v20" stroke="#b3cae8"/><use href="#alL" x="1920.500" y="95.500" width="15" height="13"/><use href="#alC" x="1943.500" y="95.500" width="15" height="13"/><use href="#alR" x="1967" y="95.500" width="15" height="13"/><use href="#alJ" x="1990.500" y="95.500" width="15" height="13"/>
          <rect class="bx" x="2012.500" y="91.500" width="31" height="21" rx="2"/><path d="M2017 97h6M2017 100h6M2017 103h6M2017 106h6M2025 97h6M2025 100h6M2025 103h6M2025 106h6" stroke="#4a5f92" stroke-width="1.500"/><use href="#ddOff" x="2034" y="101" width="5" height="3"/>
        </svg>
      </div>
      <ul class="cmds"><li class="off"><svg viewBox="0 0 16 16"><path d="M1.500 1v14M5.500 1v14M9.500 9v6M13.500 9v6M0 13l1.500 2L3 13M4 13l1.500 2L7 13" stroke="#6d84ad" fill="none"/><text class="sf" x="8" y="8" font-size="9">A</text></svg>Orientation du texte<svg class="ar"><use href="#ddOff"/></svg></li><li class="off"><svg viewBox="0 0 16 16"><rect x=".5" y="2.500" width="15" height="11" fill="#e8effa" stroke="#8a9cc0"/><path d="M3 6h10M3 8h4M3 10h10" stroke="#8a9cc0"/><path d="M6 2l2-2 2 2zM6 14l2 2 2-2z" fill="#6d84ad"/></svg>Aligner le texte<svg class="ar"><use href="#ddOff"/></svg></li><li class="off"><svg viewBox="0 0 16 16"><path d="M0 1h9l4 3.500L9 8H0l3-3.500z" fill="#b9bfcb" stroke="#98a2b5"/><rect x="6.500" y="6.500" width="9" height="9" fill="#eef2f8" stroke="#98a2b5"/><path d="M8 9.500h1M8 12.500h1M10 9.500h4M10 12.500h4" stroke="#98a2b5"/></svg>Convertir en graphique SmartArt<svg class="ar"><use href="#ddOff"/></svg></li></ul>
      </div>
      <footer>Paragraphe<svg><use href="#launch"/></svg></footer>
    </section>
    <section class="grp g-draw">
      <div class="body">
        <svg class="shapes" width="137" height="60" viewBox="2280 57 137 60">
          <rect x="2280.500" y="57.500" width="136" height="59" fill="#d9e8f8" stroke="#a9c6ea"/><rect x="2402.500" y="57.500" width="14" height="20" fill="#ececec" stroke="#c4cfdf"/><rect x="2402.500" y="78.500" width="14" height="18" fill="url(#gBtn)" stroke="#a9c6ea"/><rect x="2402.500" y="97.500" width="14" height="19" fill="url(#gBtn)" stroke="#a9c6ea"/><path d="M2407 69h5l-2.500-3z" fill="#aaa"/><use href="#dd" x="2407" y="86" width="5" height="3"/><path d="M2406 104.500h7" stroke="#4a78b8"/><use href="#dd" x="2407" y="107" width="5" height="3"/>
          <g fill="url(#gShape)" stroke="#466089" stroke-width="1.100"><rect x="2284" y="61" width="14" height="12"/><rect x="2344" y="61.500" width="14" height="11"/><ellipse cx="2370.500" cy="67" rx="7" ry="5.500"/><rect x="2384" y="61.500" width="14" height="11" rx="3"/><path d="M2291.500 81l6 12h-12zM2344 85h8v-4l6 6-6 6v-4h-8zM2368 81h5v7h4l-6.500 6-6.500-6h4zM2386 92.500v-6l5-5h4v5q4 0 3 6zM2390.500 101.500l1.800 4.500h4.700l-3.800 3 1.500 4.500-4.200-2.800-4.200 2.800 1.500-4.500-3.800-3h4.700z"/></g>
          <g fill="none" stroke="#2f4a7c" stroke-width="1.100"><path d="M2304 60l14 13M2324 60l13 13m0-4v4h-4M2303 82h7v11h8M2323 82h7v11h7m-2-2l2 2-2 2M2288 103q5-4 3 2t-5 2q6-2 6 2t4 2q-6 5-3 3M2304 101q10 1 13 12M2323 112q4-1 6-7t6 4q1 4 3 4M2350 100q-4 0-3 4t-2 3q3 0 2 3t3 4M2368 100q4 0 3 4t2 3q-3 0-2 3t-3 4"/></g>
          <text x="2285.500" y="67.500" font-size="6.500" font-weight="700" fill="#223">A</text><path d="M2291 64h5M2291 66h5M2286 69h10M2286 71h10" stroke="#6f87b5" stroke-width=".8"/>
        </svg>
        <div class="big org"><svg width="32" height="32" viewBox="0 0 32 32"><rect x="6" y="6" width="18" height="18" fill="#f8dc6b" stroke="#b79425"/><rect x=".5" y=".5" width="14" height="13" fill="#dfe2e8" stroke="#4f5868"/><rect x="16.500" y="17.500" width="14" height="13" fill="#dfe2e8" stroke="#4f5868"/></svg><span>Organiser</span><svg width="5" height="3"><use href="#dd"/></svg></div>
        <div class="big off styl"><svg width="32" height="32" viewBox="0 0 32 32"><rect x="1.500" y="1.500" width="27" height="28" rx="5" fill="#d3dded" stroke="#a4b2cb"/><path d="M30 10L20 21l3 3 7-12z" fill="#b7c3d8" stroke="#8a97af"/><path d="M20 21q-6 0-8 9 9 0 11-6z" fill="#8e9bb3"/></svg><span>Styles<br>rapides <svg width="5" height="4"><use href="#ddOff"/></svg></span></div>
        <ul class="cmds"><li class="off"><svg viewBox="0 0 16 16"><path d="M3 6l5-5 6 5.500-5.500 5z" fill="#e4ebf6" stroke="#8495b3"/><rect y="12.500" width="16" height="3" fill="#a19d99"/></svg>Remplissage de forme<svg class="ar"><use href="#ddOff"/></svg></li><li class="off"><svg viewBox="0 0 16 16"><path d="M2 2h8M2 2v8h7l5-8" fill="none" stroke="#8495b3"/><path d="M6 9l7-8 1.500 1.500-7 7z" fill="#cdd8ea" stroke="#8495b3"/><rect y="12.500" width="16" height="3" fill="#a19d99"/></svg>Contour de forme<svg class="ar"><use href="#ddOff"/></svg></li><li class="off"><svg viewBox="0 0 16 16"><rect x="4" y="5" width="10" height="10" rx="3" fill="#a3b2ce"/><rect x="2.500" y="1.500" width="11" height="11" rx="2.500" fill="#eef3fb" stroke="#b4c1d8"/></svg>Effets sur la forme<svg class="ar"><use href="#ddOff"/></svg></li></ul>
      </div>
      <footer>Dessin<svg><use href="#launch"/></svg></footer>
    </section>
    <section class="grp g-mod">
      <div class="body"><ul class="cmds"><li><svg><use href="#find"/></svg>Rechercher</li><li><svg><use href="#replace"/></svg>Remplacer<svg class="ar"><use href="#dd"/></svg></li><li><svg><use href="#pointer"/></svg>Sélectionner<svg class="ar"><use href="#dd"/></svg></li></ul></div>
      <footer>Modification</footer>
    </section>
  </div>
  <div class="pwork">
    <aside class="pane">
      <svg class="ptabs" width="261" height="21" viewBox="0 0 261 21"><rect width="261" height="21" fill="#a9c5ec"/><path d="M61 19V4q0-3 3-3h52q4 0 6 3l14 15z" fill="#c6dbf6" stroke="#6f93c8"/><path d="M1 20V4q0-3 3-3h65q4 0 6 3l12 16z" fill="#dfeafa" stroke="#6f93c8"/><path d="M87 19.500h174" stroke="#7fa3d6"/><text x="8" y="14" font-size="12" font-weight="700" textLength="67" lengthAdjust="spacingAndGlyphs">Diapositives</text><text x="92" y="14" font-size="12" textLength="23" lengthAdjust="spacingAndGlyphs">Plan</text><path d="M247.500 7l6 6M253.500 7l-6 6" stroke="#3d66a5" stroke-width="2"/></svg>
      <div class="thumbs">
        <div class="th"><b>1</b><svg class="slide" width="229" height="172" viewBox="0 0 229 172"><g class="t"><text x="114.500" y="76.500" text-anchor="middle" font-size="12.500" textLength="141">TD Epistemo Illustrations</text><text x="114.500" y="108" text-anchor="middle" font-size="8" fill="#8a8a8a" textLength="69">Agnes Delaborde</text></g></svg></div>
        <div class="th"><b>2</b><svg class="slide two" width="229" height="172" viewBox="0 0 229 172">
          <text class="t" x="3.500" y="7" font-size="5">TD 1 AEF</text>
          <g class="st"><rect x="33" y="23.700" width="15.700" height="16"/><circle cx="78.700" cy="32" r="8"/><circle cx="115.700" cy="32" r="8"/><circle cx="152.700" cy="32" r="8"/><path d="M187.700 18.800L197 39.800H178.700z"/><rect x="48.700" y="62" width="16.300" height="15.700"/><circle cx="94.700" cy="70" r="8"/><circle cx="131.700" cy="70" r="8"/><path d="M166.700 56L176 77.700H157.700z"/><rect x="45.700" y="110.600" width="16" height="16"/><circle cx="90.700" cy="119" r="8"/><circle cx="128" cy="119" r="8"/><path d="M162.700 106L172 126.700H153.700z"/><path d="M20.700 32.500H33" marker-end="url(#headBlack)"/><path d="M36.700 70.400H48.700" marker-end="url(#headBlack)"/><path d="M32.700 119.800H45" marker-end="url(#headBlack)"/></g>
          <g class="tr"><path d="M48.700 32.500H70"/><path d="M87 32.500H107.300"/><path d="M123.700 32.500H144.300"/><path d="M161 32.500H181"/><path d="M65 70.400H85.300"/><path d="M103 70.400H123.300"/><path d="M140 70.400H160"/><path d="M61.700 119.800H82.700"/><path d="M99 119.800H119.700"/><path d="M136.300 119.800H156.500"/><path d="M89 63C89 56 92 52.400 94.700 52.400S100 56 100.700 62.400"/><path d="M126 63C126 56 129 52.400 131.700 52.400S137 56 137.700 62.400"/><path d="M123 111C123 105 126 102.200 128.700 102.200S133.500 105 134 111.400"/><path class="nohead" d="M131.700 78Q127 83 113.700 83T95 78v3"/></g>
          <g class="d" text-anchor="middle"><text x="40.500" y="35.200">0</text><text x="78" y="35.200">1</text><text x="115.500" y="35.200">2</text><text x="152.500" y="35.200">3</text><text x="186.500" y="36">4</text><text x="56.500" y="73.200">0</text><text x="93.500" y="73.200">1</text><text x="131.500" y="73.200">2</text><text x="165.500" y="73.200">3</text><text x="52.500" y="122.200">0</text><text x="90.500" y="122.200">1</text><text x="127.500" y="122.200">2</text><text x="161.500" y="123.200">3</text></g>
          <g class="l" text-anchor="middle"><text x="60" y="29.500">D</text><text x="97" y="30">N</text><text x="133" y="30">V</text><text x="171.700" y="30">P</text><text x="73.700" y="67.400">a</text><text x="112.700" y="67.400">b</text><text x="151.300" y="67.400">a,#</text><text x="94.300" y="49">a,b</text><text x="131.300" y="49">a,b</text><text x="112.700" y="90">a</text><text x="71.700" y="116">"a"</text><text x="110" y="116">"b"</text><text x="145" y="116">"a"</text><text x="128.700" y="100">"b"</text></g>
        </svg></div>
        <div class="th sel"><b>3</b><svg class="slide small" width="229" height="172" viewBox="0 0 1070 803"><use href="#automate"/></svg></div>
      </div>
    </aside>
    <div class="split"></div>
    <div class="main">
      <div class="stage">
        <svg class="swoosh" width="600" height="400" viewBox="0 0 600 400"><path d="M0 0H200Q90 8 0 43z" fill="#fff" opacity=".2"/></svg>
        <svg class="slide full" width="1070" height="803" viewBox="0 0 1070 803"><use href="#automate"/></svg>
        <svg class="vscroll" width="14" height="832" viewBox="0 0 14 832"><rect width="14" height="835" fill="#7396c6"/><rect width="14" height="18" fill="#89a9d5"/><path d="M3 12h8L7 7.500z" fill="#3f5a8c"/><rect x=".5" y="517.500" width="13" height="249" rx="1" fill="#c3d6f1" stroke="#5f7db0"/><rect x="1.500" y="518.500" width="5" height="247" fill="#e3edfa"/><path d="M3 638h8M3 640.500h8M3 643h8M3 645.500h8" stroke="#6d85ad"/><path d="M3 773h8l-4 4.500z" fill="#3f5a8c"/><rect y="785" width="14" height="48" fill="#9cbce8"/><path d="M4 793l3-3.500 3 3.500zM4 797.500l3-3.500 3 3.500zM4 805h6l-3 3.500zM4 809.500h6l-3 3.500z" fill="#111"/></svg>
      </div>
      <div class="bar"></div>
      <div class="notes"><svg width="290" height="48"><text class="t" x="9" y="20.500" font-size="15.500" textLength="275" lengthAdjust="spacingAndGlyphs">Cliquez pour ajouter des commentaires</text></svg><svg width="15" height="48" viewBox="0 0 15 48"><rect width="15" height="48" fill="#8ba9d3"/><path d="M4 10h8L8 5.500zM4 38h8l-4 4.500z" fill="#6683b3"/></svg></div>
    </div>
  </div>
  <footer class="status">
    <span class="s113">Diapositive 3 sur 3</span><span class="s93">"Thème Office"</span><span class="s135p"><svg width="18" height="16"><use href="#spell"/></svg>Français (France)</span>
    <svg class="zoom" width="273" height="22" viewBox="2687 1028 273 22">
      <path d="M2687.500 1028v22" stroke="#8fb0dd"/><rect x="2692" y="1029.500" width="55" height="18" rx="2" fill="#d4e3f7" stroke="#86a5d0"/>
      <g fill="#fff" stroke="#4a5f88"><rect x="2697.500" y="1033.500" width="10" height="10"/><path d="M2701.500 1034v9M2701.500 1040.500h6"/><path d="M2715.500 1033.500h4v4h-4zM2721.500 1033.500h4v4h-4zM2715.500 1039.500h4v4h-4zM2721.500 1039.500h4v4h-4z"/><path d="M2734.500 1033.500h10v5h-10zM2739.500 1038v4M2737 1043.500h5"/></g>
      <text x="2757.500" y="1042.500" font-size="11.500" textLength="29" lengthAdjust="spacingAndGlyphs" fill="#15366f">111 %</text>
      <path d="M2812 1038.500h102M2863.500 1034v9" stroke="#5b7cae"/><path d="M2812 1039.500h102" stroke="#e8f1fd"/><use href="#minus" x="2796" y="1030.500" width="16" height="16"/><use href="#plus" x="2913.500" y="1030.500" width="16" height="16"/><path d="M2860 1032.500h9v8l-4.500 4-4.500-4z" fill="#eef4fc" stroke="#4f6c9e"/>
      <rect x="2938.500" y="1031.500" width="14" height="14" rx="2" fill="#eef4fc" stroke="#4a5f88"/><path d="M2941 1034l3 3m0-2.500v2.500h-2.500M2950 1034l-3 3M2941 1043l3-3M2950 1043l-3-3M2945.500 1033v2M2945.500 1042v2" stroke="#4a5f88" fill="none"/>
    </svg>
  </footer>
</section>
</main>
</body>
</html>
```
FILE: styles.css
```css
* { box-sizing: border-box; margin: 0; padding: 0; }
body { width: 2960px; height: 1050px; overflow: hidden; font-family: "Open Sans", "Noto Sans", sans-serif; font-size: 11.5px; color: #15366f; }
svg { flex: none; display: block; }
ul { list-style: none; }
.defs { position: absolute; }
.desk { display: flex; width: 2960px; height: 1050px; overflow: hidden; }
.left { width: 1280px; display: flex; flex-direction: column; }
.void { height: 26px; background: #000; }
.app { display: flex; flex-direction: column; }
.word { height: 962px; background: #bfdbff; }
.ppt { width: 1680px; height: 1050px; background: #bfdbff; }

/* title bars */
.title { display: flex; flex: none; height: 26px; background: #ebebeb; border-bottom: 1px solid #d2d2d2; padding-left: 4px; align-items: flex-start; position: relative; }
.ppt .title { background: #e5c8d5; border-bottom-color: #cfa9ba; }
.orb { width: 38px; height: 38px; margin-top: 4px; position: relative; z-index: 3; }
.qat { margin-left: -5px; }
.caption { margin-left: 247px; }
.caption text { fill: #3b3b3b; }
.ppt .caption { margin-left: 505px; }
.winctl { margin-left: auto; margin-right: 3px; }

/* ribbon tabs */
.tabs { display: flex; flex: none; height: 24px; padding-left: 49px; align-items: flex-start; font-size: 11.8px; line-height: 25px; letter-spacing: -.15px; }
.tabs b { width: 59px; height: 24px; margin-top: 1px; text-align: center; font-weight: 400; background: linear-gradient(#fff, #e6eff9); border: 1px solid #8db2e3; border-bottom: 0; border-radius: 4px 4px 0 0; position: relative; z-index: 2; line-height: 22px; }
.tabs span { text-align: center; }
.tabs .help { margin: 4px 4px 0 auto; }
.w69 { width: 69px; } .w71 { width: 71px; } .w73 { width: 73px; } .w79 { width: 79px; } .w80 { width: 80px; } .w81 { width: 81px; } .w88 { width: 88px; } .w91 { width: 91px; } .w94 { width: 94px; } .w104 { width: 104px; }
.ppt .tabs .w104:nth-child(4) { width: 88px; }
.ppt .tabs .w73 { width: 75px; }
.ppt .tabs .w69:nth-child(7) { width: 70px; }

/* ribbon */
.ribbon { display: flex; flex: none; gap: 4px; height: 90px; margin-right: 2px; padding: 2px 0 0 4px; letter-spacing: -.28px; background: linear-gradient(#dfe9f5, #d3e0f0 18%, #c7d8ed 22%, #d9e8f5 80%, #e8f6ff); border: 1px solid #8db2e3; border-bottom: 2px solid #8fd8e6; border-left: 0; border-radius: 0 3px 3px 0; }
.grp { display: flex; flex-direction: column; height: 84px; border: 1px solid #a5c3e0; border-radius: 3px; box-shadow: 1px 1px 0 #eef6fd; overflow: hidden; }
.grp footer { height: 16px; background: #c1d8f0; color: #3e6aaa; line-height: 15px; display: flex; justify-content: center; position: relative; letter-spacing: -.1px; }
.grp footer svg { width: 8px; height: 8px; position: absolute; right: 4px; top: 3px; }
.body, .rows { height: 66px; }
.body { display: flex; }
.rows { display: flex; flex-direction: column; gap: 7px; padding: 9px 0 0 3px; }
.g-clip { width: 220px; } .g-font { width: 261px; } .g-para { width: 208px; } .g-style { width: 447px; } .g-mod { width: 107px; }
.g-dia { width: 171px; } .g-pfont { width: 227px; } .g-ppara { width: 360px; } .g-draw { width: 405px; }
.big { display: flex; flex-direction: column; align-items: center; text-align: center; line-height: 13px; padding-top: 4px; width: 46px; }
.big > span { margin-top: 3px; }
.big > svg + span + svg { margin-top: 5px; }
.big span svg { display: inline-block; vertical-align: 1px; }
.big.off, .off { color: #8b8d92; }
.g-clip .big { padding-left: 4px; width: 48px; }
.cmds li { display: flex; align-items: center; height: 22px; white-space: nowrap; line-height: 22px; }
.cmds li svg { width: 16px; height: 16px; margin-right: 4px; }
.cmds li svg.ar { width: 5px; height: 3px; margin: 0 0 0 6px; }
.g-mod .cmds { padding-left: 4px; }
.nouv { width: 72px; white-space: nowrap; padding-top: 2px; }
.nouv + .cmds { padding-left: 2px; }
.g-ppara .rows { width: 156px; }
.shapes { margin: 4px 0 0 3px; }
.org { width: 64px; padding-top: 1px; margin-top: 2px; }
.styl { width: 43px; white-space: nowrap; padding-top: 1px; margin: 2px 6px 0 0; }
.bx { fill: url(#gBtn); stroke: #8fb0dc; }
.sf { font-family: "Liberation Serif", serif; fill: #333b52; }
.dim text { fill: #6379a4; }

.gallery { display: flex; width: 377px; height: 60px; margin: 4px 0 0 4px; border: 1px solid #b5cdea; background: #d9e8f8; padding: 0 0 0 1px; }
.sty { width: 72px; height: 58px; padding: 5px 4px 4px; display: flex; flex-direction: column; color: #10106e; }
.sty i, .sty span { background: #fff; display: block; width: 64px; overflow: hidden; white-space: nowrap; text-align: center; padding: 0 2px; }
.sty i { font: 12.5px/34px "Liberation Sans", sans-serif; height: 31px; color: #000; text-align: left; letter-spacing: -.1px; }
.sty span { height: 18px; line-height: 15px; letter-spacing: -.1px; }
.sty.on { border: 2px solid #e9a13a; border-radius: 2px; background: #fbd67f; padding: 3px 2px; }
.sty.h1 i { font: 700 19px/34px "Liberation Serif", serif; letter-spacing: 0; }
.sty.h2 i { font: italic 700 17.500px/34px "Liberation Serif", serif; }
.sty.h3 i { font: 700 15.500px/34px "Liberation Serif", serif; }
.updown { display: flex; flex-direction: column; width: 14px; }
.updown span { flex: 1; display: flex; align-items: center; justify-content: center; border: 1px solid #b5cdea; background: linear-gradient(#dbe8f8, #c3d8f3); }
.updown span:first-child { background: #ececec; }
.modif { width: 62px; padding-top: 6px; white-space: nowrap; }
.modif > span { margin-top: 1px; }

/* word workspace */
.work { display: flex; height: 774px; flex: none; }
.canvas { flex: 1; overflow: hidden; position: relative; padding-left: 300px; background: linear-gradient(#9ebce6, #7d9ecd 30%, #557db2 74.500%, #6591cf); }
.swoosh { position: absolute; left: 0; top: 0; }
.hruler text, .vn { letter-spacing: -.5px; }
.page { position: relative; width: 639px; background: #fff; border: 1px solid #5d6470; box-shadow: 3px 3px 6px rgba(20, 40, 80, .5); font-family: "Liberation Sans", Arial, sans-serif; font-size: 11px; color: #000; }
.p1 { height: 265px; border-top: 0; display: flex; flex-direction: column; }
.mini { margin: 7px 0 0 247px; border-collapse: collapse; width: 145px; table-layout: fixed; }
.mini td, .mini th { border: 1px solid #000; height: 15.700px; text-align: center; line-height: 13px; }
.arr { display: inline-block; vertical-align: -1px; }
.pfoot { margin-top: auto; padding: 0 54px 38px 39px; display: flex; justify-content: space-between; font-size: 10.500px; line-height: 12px; color: #7f7f7f; letter-spacing: -.35px; }
.p2 { height: 560px; margin-top: 10px; padding-top: 38px; }
.page h2 { font-weight: 400; font-size: 14px; line-height: 16px; letter-spacing: -.45px; margin-left: 62px; }
.fig { margin: 17px 0 7px 63px; }
.li { display: flex; line-height: 18.500px; }
.li em { font-style: normal; width: 15px; margin-left: 85px; }
.li p { white-space: nowrap; font-size: 11px; }
.j269 { width: 269px; text-align-last: justify; letter-spacing: -.08px; }
.j379 { width: 379px; text-align-last: justify; }
.j499 { width: 499px; text-align-last: justify; letter-spacing: -.08px; }
.j499.dense { letter-spacing: -.17px; }
.tight { line-height: 12.500px; }
.last { margin-top: 6.500px; }
.ex8 { margin-top: 11.500px; margin-bottom: 11px; }
.page u { text-decoration: underline wavy #d22 .8px; text-underline-offset: 0; text-decoration-skip-ink: none; }
.page u.g { text-decoration-color: #1a8a1a; }
.mots { margin: 3.500px 0 0 114px; border-collapse: collapse; width: 409px; table-layout: fixed; }
.mots td, .mots th { border: 1px solid #000; height: 19px; text-align: center; line-height: 14px; padding: 0; }
.mots th { height: 20px; }
.mots .dbl { border-right: 4px double #000; }

/* automata */
.st { fill: none; stroke: #000; stroke-width: var(--sw, 3); }
.tr { fill: none; stroke: #4a7ebb; stroke-width: var(--sw, 3); }
.tr path:not(.nohead) { marker-end: url(#headBlue); }
.t, .t text { font-family: Lato, "Open Sans", sans-serif; }
.t { fill: #000; }
.d { font-family: Lato, sans-serif; font-size: 38px; fill: #000; }
.l { font-family: Lato, sans-serif; font-size: 22.500px; font-weight: var(--lw, 400); fill: #000; }
.fig { --sw: 1.5; }
.fig .d { font-family: "Liberation Serif", serif; font-size: 21px; fill: #222; }
.fig .l { font-size: 11.500px; fill: #333; }
.small { --sw: 5; --lw: 700; }
.two { --sw: 1.1; }
.two .d { font-size: 8.500px; }
.two .l { font-size: 5.300px; font-weight: 700; }

/* status bars */
.status { display: flex; flex: none; align-items: center; height: 22px; background: linear-gradient(#e3effd, #c5dcf8 45%, #aaccf6 50%, #d5e6fb); border-top: 1px solid #567db0; letter-spacing: -.2px; line-height: 16px; }
.ppt .status { height: 23px; }
.status span { display: flex; align-items: center; height: 20px; border-right: 1px solid #9dbbe5; white-space: nowrap; padding: 0 0 2px 8px; }
.status span svg { margin-right: 15px; }
.s85 { width: 85px; } .s71 { width: 71px; } .s135 { width: 135px; } .s34 { width: 34px; }
.s113 { width: 115px; } .s93 { width: 93px; } .s135p { width: 135px; }
.zoom { margin-left: auto; }

/* taskbar */
.taskbar { display: flex; flex: none; height: 62px; background: #afa6b0; color: #fff; font-size: 13px; align-items: flex-start; letter-spacing: -.45px; }
.start { margin: 23px 0 0 12px; }
.quick { margin-left: 10px; }
.tasks { margin-left: 25px; padding-top: 1px; width: 881px; display: flex; flex-direction: column; gap: 2px; }
.trow { display: flex; gap: 2px; }
.trow span { display: flex; align-items: center; height: 29px; width: 145px; border: 1px solid #8b848d; background: #b9b1ba; padding-left: 10px; white-space: nowrap; }
.trow .nl { margin-left: -2px; }
.trow span:nth-child(6) { margin-left: 1px; }
.trow svg { width: 15px; height: 15px; margin-right: 4px; }
.r2 span { width: 159px; }
.r2 .cur { background: #cdc7ce; border-color: #f0edf0; margin-left: -1px; }
.lang { margin: 24px 0 0 8px; width: 22px; line-height: 16px; }
.clock { width: 74px; height: 62px; margin-left: 9px; display: flex; flex-direction: column; align-items: center; justify-content: space-between; line-height: 18px; }

/* powerpoint workspace */
.pwork { display: flex; flex: none; height: 887px; border-top: 2px solid #86a6cf; }
.pane { width: 261px; background: linear-gradient(#a8c6ee, #7d9ecd 30%, #5a81b6 72%, #6591cf); }
.ptabs text { fill: #10246e; }
.thumbs { padding: 3px 3px 0; display: flex; flex-direction: column; gap: 3.800px; }
.th { display: flex; height: 182px; padding: 4.500px 0 0 4px; border: 1px solid transparent; }
.th b { width: 16px; font-size: 12px; color: #fff; text-shadow: 1px 1px 1px #345; line-height: 20px; }
.sel { border-color: #e07b1c; background: linear-gradient(#fcdba4, #f9c478 35%, #f2a640 36%, #eb9430); }
.slide { background: #fff; box-shadow: 0 0 0 1px #666f7c, 3px 3px 4px rgba(20, 40, 80, .45); position: relative; }
.split { width: 6px; background: #b0d0ff; border-left: 1px solid #6f93c8; border-right: 1px solid #6f93c8; }
.main { flex: 1; display: flex; flex-direction: column; }
.stage { display: flex; justify-content: space-between; height: 832px; flex: none; padding-left: 163px; position: relative; background: linear-gradient(#a3c1e9, #7d9ecd 30%, #557db2 72%, #6591cf); }
.full { margin-top: 15px; box-shadow: 3px 3px 6px rgba(20, 40, 80, .55); }
.bar { flex: none; height: 5px; background: #b0d0ff; border-bottom: 1px solid #6f93c8; }
.notes { height: 48px; background: #fff; display: flex; justify-content: space-between; }
```
